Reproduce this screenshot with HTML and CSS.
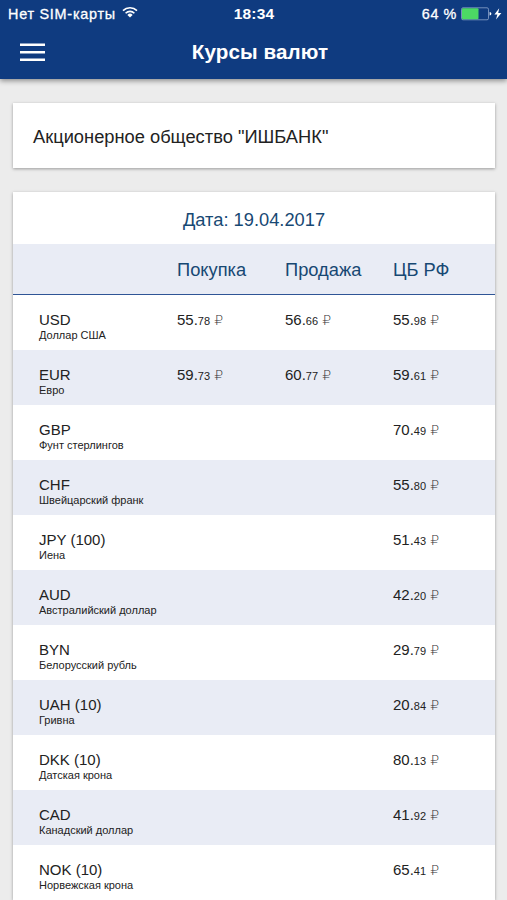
FILE: index.html
```html
<!DOCTYPE html>
<html lang="ru">
<head>
    <meta charset="UTF-8">
    <meta name="viewport" content="width=device-width, initial-scale=1.0">
    <title>Курсы валют</title>
    <link rel="stylesheet" href="styles.css">
</head>
<body>
    <header class="header">
        <div class="status-bar">
            <div class="carrier">
                <span class="carrier-name">Нет SIM-карты</span>
                <svg class="wifi" width="16" height="12" viewBox="0 0 16 12" fill="none" stroke="#fff" stroke-width="1.6">
                    <path d="M1 4.6a10 10 0 0 1 14 0"/>
                    <path d="M3.6 7.2a6.3 6.3 0 0 1 8.8 0"/>
                    <path d="M8 11.4L5.4 8.9a3.7 3.7 0 0 1 5.2 0z" fill="#fff" stroke="none"/>
                </svg>
            </div>
            <div class="time">18:34</div>
            <div class="power">
                <span class="percent">64 %</span>
                <svg width="41" height="14" viewBox="0 0 41 14">
                    <rect x=".5" y=".8" width="27" height="12" rx="1.5" fill="none" stroke="#8ea5cc" stroke-width=".8"/>
                    <rect x="1" y="1.3" width="16.5" height="11" rx="1" fill="#4cd964"/>
                    <path d="M28.6 5q1.8 .3 1.8 1.8t-1.8 1.8z" fill="#fff"/>
                    <path d="M38.2 1.2l-4.8 6.4h3l-1.4 5 5.4-6.6h-3.2z" fill="#fff"/>
                </svg>
            </div>
        </div>
        <div class="nav">
            <button class="menu" aria-label="Меню">
                <svg width="25" height="20" viewBox="0 0 25 20" stroke="#fff" stroke-width="2.4">
                    <path d="M0 2.8h25M0 10.3h25M0 17.8h25"/>
                </svg>
            </button>
            <h1>Курсы валют</h1>
        </div>
    </header>

    <div class="card bank">Акционерное общество "ИШБАНК"</div>

    <div class="card">
        <div class="date">Дата: 19.04.2017</div>
        <table>
            <thead>
                <tr>
                    <th></th>
                    <th>Покупка</th>
                    <th>Продажа</th>
                    <th>ЦБ РФ</th>
                </tr>
            </thead>
            <tbody>
                <tr>
                    <td>USD<small>Доллар США</small></td>
                    <td>55.<span class="cents">78</span> <span class="rub">₽</span></td>
                    <td>56.<span class="cents">66</span> <span class="rub">₽</span></td>
                    <td>55.<span class="cents">98</span> <span class="rub">₽</span></td>
                </tr>
                <tr>
                    <td>EUR<small>Евро</small></td>
                    <td>59.<span class="cents">73</span> <span class="rub">₽</span></td>
                    <td>60.<span class="cents">77</span> <span class="rub">₽</span></td>
                    <td>59.<span class="cents">61</span> <span class="rub">₽</span></td>
                </tr>
                <tr>
                    <td>GBP<small>Фунт стерлингов</small></td>
                    <td></td>
                    <td></td>
                    <td>70.<span class="cents">49</span> <span class="rub">₽</span></td>
                </tr>
                <tr>
                    <td>CHF<small>Швейцарский франк</small></td>
                    <td></td>
                    <td></td>
                    <td>55.<span class="cents">80</span> <span class="rub">₽</span></td>
                </tr>
                <tr>
                    <td>JPY (100)<small>Иена</small></td>
                    <td></td>
                    <td></td>
                    <td>51.<span class="cents">43</span> <span class="rub">₽</span></td>
                </tr>
                <tr>
                    <td>AUD<small>Австралийский доллар</small></td>
                    <td></td>
                    <td></td>
                    <td>42.<span class="cents">20</span> <span class="rub">₽</span></td>
                </tr>
                <tr>
                    <td>BYN<small>Белорусский рубль</small></td>
                    <td></td>
                    <td></td>
                    <td>29.<span class="cents">79</span> <span class="rub">₽</span></td>
                </tr>
                <tr>
                    <td>UAH (10)<small>Гривна</small></td>
                    <td></td>
                    <td></td>
                    <td>20.<span class="cents">84</span> <span class="rub">₽</span></td>
                </tr>
                <tr>
                    <td>DKK (10)<small>Датская крона</small></td>
                    <td></td>
                    <td></td>
                    <td>80.<span class="cents">13</span> <span class="rub">₽</span></td>
                </tr>
                <tr>
                    <td>CAD<small>Канадский доллар</small></td>
                    <td></td>
                    <td></td>
                    <td>41.<span class="cents">92</span> <span class="rub">₽</span></td>
                </tr>
                <tr>
                    <td>NOK (10)<small>Норвежская крона</small></td>
                    <td></td>
                    <td></td>
                    <td>65.<span class="cents">41</span> <span class="rub">₽</span></td>
                </tr>
            </tbody>
        </table>
    </div>
</body>
</html>
```
FILE: styles.css
```css
* {
    box-sizing: border-box;
}
body {
    font-family: "Liberation Sans", Arial, sans-serif;
    background-color: #ececec;
    color: #222;
    margin: 0;
    height: 900px;
    overflow: hidden;
}

/* Header */
.header {
    height: 79px;
    background-color: #0f3b80;
    color: #fff;
    box-shadow: 0 2px 5px rgba(0, 0, 0, 0.4);
}
.status-bar {
    display: grid;
    grid-template-columns: 1fr auto 1fr;
    align-items: center;
    height: 27px;
    padding: 0 5px 0 8px;
    font-size: 14px;
}
.carrier {
    display: flex;
    align-items: center;
    gap: 6px;
}
.carrier-name {
    font-size: 14.4px;
    letter-spacing: 0.75px;
    -webkit-text-stroke: 0.3px #fff;
}
.wifi {
    margin-bottom: 3px;
}
.time {
    font-weight: bold;
    font-size: 15.5px;
    letter-spacing: 0.2px;
    margin-right: 2px;
}
.power {
    display: flex;
    align-items: center;
    justify-content: flex-end;
    gap: 4px;
}
.percent {
    font-size: 14.4px;
    letter-spacing: 0.6px;
    -webkit-text-stroke: 0.3px #fff;
}
.nav {
    display: grid;
    grid-template-columns: 60px 1fr 47px;
    align-items: center;
    height: 50px;
}
.menu {
    display: flex;
    width: 25px;
    margin-left: 20px;
    padding: 0;
    background: none;
    border: none;
}
h1 {
    margin: 0;
    font-size: 20.6px;
    letter-spacing: 0.1px;
    text-align: center;
}

/* Cards */
.card {
    width: 482px;
    margin: 24px 0 0 13px;
    background-color: #fff;
    box-shadow: 0 1px 3px rgba(0, 0, 0, 0.35);
}
.bank {
    height: 65px;
    padding: 0 20px;
    line-height: 67px;
    font-size: 18.3px;
}
.date {
    height: 52px;
    line-height: 55px;
    font-size: 18.3px;
    text-align: center;
    color: #174873;
}

/* Rates table */
table {
    width: 100%;
    table-layout: fixed;
    border-collapse: separate;
    border-spacing: 0;
}
th, td {
    padding: 0;
    text-align: left;
    width: 108px;
}
th:first-child, td:first-child {
    width: 164px;
    padding-left: 26px;
}
th:last-child, td:last-child {
    width: 102px;
}
th {
    height: 51px;
    padding-top: 1px;
    font-size: 18.3px;
    font-weight: normal;
    color: #174873;
    background-color: #e9ecf5;
    border-bottom: 1px solid #2f5596;
}
td {
    height: 55px;
    padding-top: 16px;
    vertical-align: top;
    font-size: 15px;
    line-height: 17px;
}
tbody tr:nth-child(even) {
    background-color: #e9ecf5;
}
small {
    display: block;
    font-size: 11px;
    line-height: 15px;
    white-space: nowrap;
}
.cents {
    font-size: 11px;
}
.rub {
    font-family: "DejaVu Sans", sans-serif;
    font-size: 14px;
    font-weight: 200;
    line-height: 1;
    color: #333;
}
```
